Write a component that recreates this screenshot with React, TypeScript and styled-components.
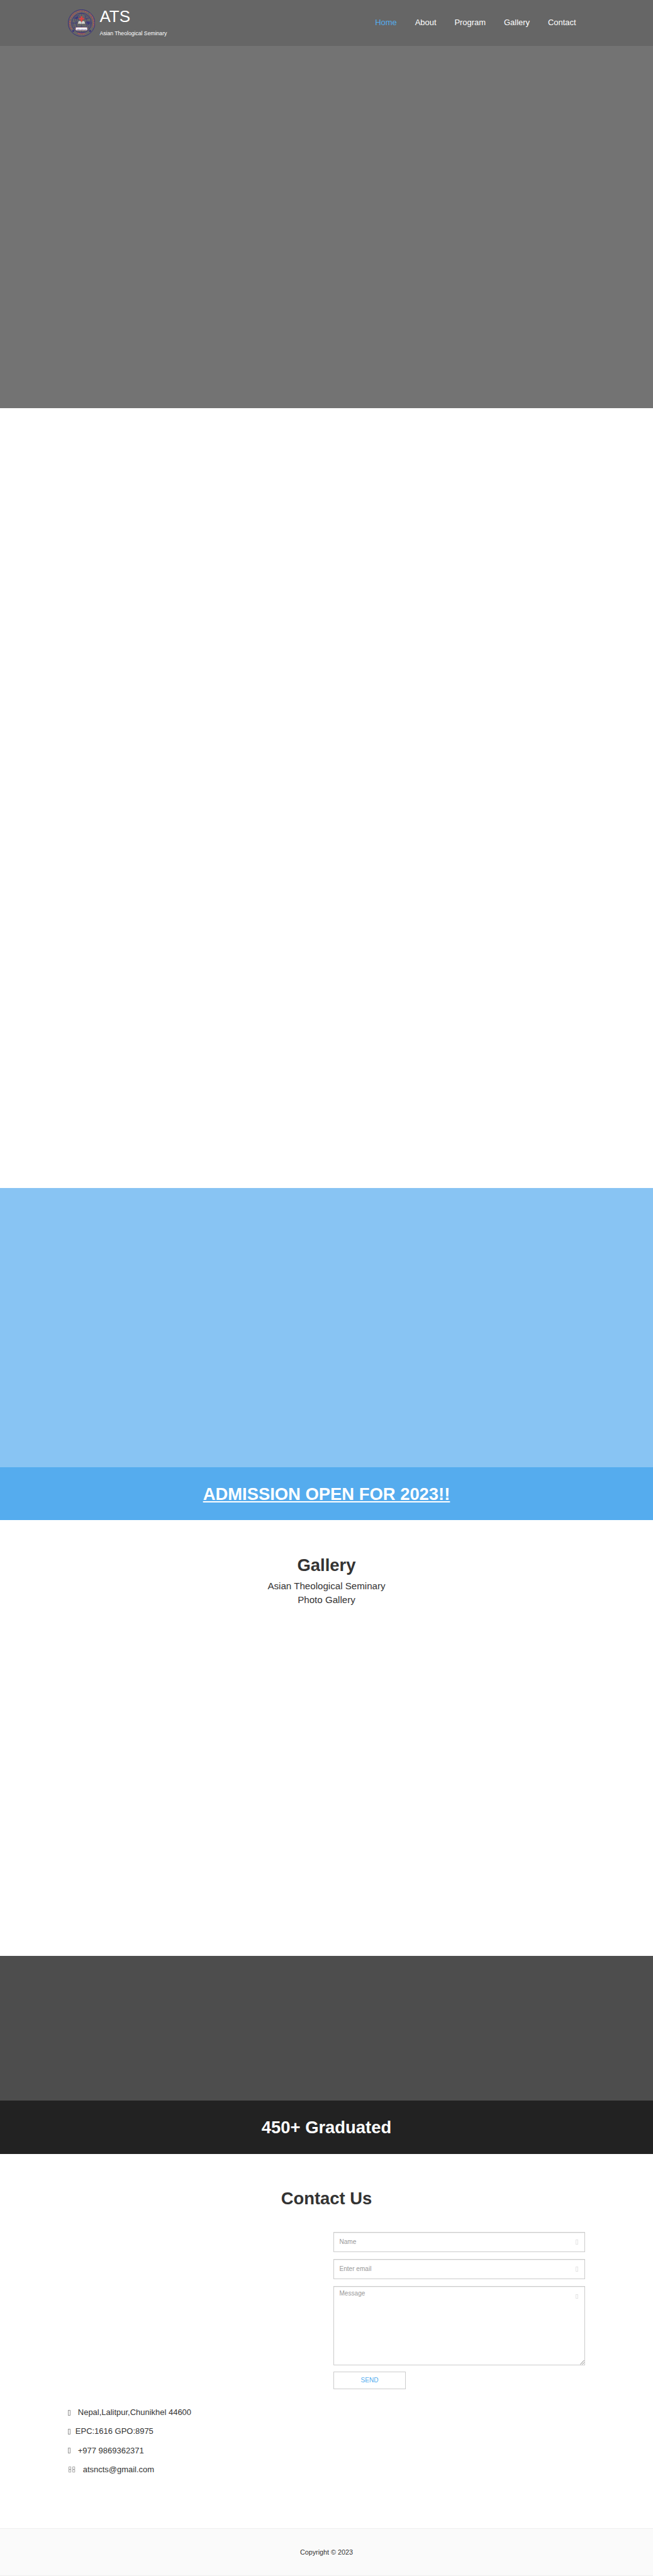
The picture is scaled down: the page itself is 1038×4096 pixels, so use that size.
import React from 'react';
import styled, { createGlobalStyle } from 'styled-components';

const SCALE = 4096 / 5680;
const u = (n: number) => `${(n * SCALE).toFixed(3)}px`;

const GlobalStyle = createGlobalStyle`
  *, *::before, *::after { box-sizing: border-box; }
  body {
    margin: 0;
    background: #fff;
    color: #333;
    font-family: "Liberation Sans", Arial, Helvetica, sans-serif;
  }
`;

const Page = styled.div`
  width: 100%;
  height: ${u(5680)};
  display: flex;
  flex-direction: column;
  overflow: hidden;
`;

const Container = styled.div`
  width: ${u(1140)};
  margin: 0 auto;
`;

const Band = styled.section<{ $h: number; $bg: string }>`
  flex: none;
  height: ${p => u(p.$h)};
  background: ${p => p.$bg};
`;

const Header = styled.header`
  height: ${u(101)};
  background: #666;
`;

const HeaderRow = styled(Container)`
  height: 100%;
  display: flex;
  justify-content: space-between;
  align-items: center;
`;

const Brand = styled.a`
  display: flex;
  align-items: center;
  gap: ${u(10)};
  color: #fff;
`;

const Emblem = styled.svg`
  display: block;
  width: ${u(60)};
  height: ${u(60)};
`;

const BrandText = styled.div`
  display: flex;
  flex-direction: column;
  gap: ${u(6.5)};
`;

const BrandName = styled.span`
  font-size: ${u(36)};
  line-height: ${u(40)};
`;

const BrandTag = styled.span`
  font-size: ${u(12)};
  line-height: ${u(20)};
`;

const Nav = styled.nav`
  display: flex;
  gap: ${u(40)};
  padding-right: ${u(20)};
`;

const NavLink = styled.a<{ $active?: boolean }>`
  font-size: ${u(18)};
  line-height: ${u(20)};
  color: ${p => (p.$active ? '#55acee' : '#fff')};
`;

const Banner = styled(Band)<{ $underline?: boolean }>`
  padding-top: ${u(1)};
  text-align: center;
  font-size: ${u(38)};
  font-weight: 700;
  line-height: ${u(117)};
  color: #fff;
  text-decoration: ${p => (p.$underline ? 'underline' : 'none')};
`;

const Title = styled.h2`
  margin: 0;
  padding-top: ${u(78.6)};
  text-align: center;
  font-size: ${u(38)};
  font-weight: 700;
  line-height: ${u(42)};
`;

const Lead = styled.p`
  margin: ${u(10)} 0 0;
  text-align: center;
  font-size: ${u(21)};
  line-height: ${u(30)};
`;

const Form = styled.form`
  width: ${u(555)};
  margin: ${u(51.4)} 0 0 auto;
  display: flex;
  flex-direction: column;
  gap: ${u(15)};
`;

const Field = styled.label<{ $h: number; $top: number }>`
  display: flex;
  justify-content: space-between;
  height: ${p => u(p.$h)};
  padding: ${p => u(p.$top)} ${u(14.5)} 0 ${u(12)};
  border: 1px solid #ccc;
  box-shadow: inset 0 1px 1px rgba(0, 0, 0, 0.075);
  font-size: ${u(14)};
  line-height: ${u(20)};
  color: #999;
  position: relative;
`;

const FieldMark = styled.span<{ $top: number }>`
  width: ${u(5)};
  height: ${u(10.5)};
  margin-top: ${p => u(p.$top)};
  border: 1px solid #e4e4e4;
`;

const Grip = styled.svg`
  position: absolute;
  right: 0;
  bottom: 0;
  width: 7px;
  height: 8px;
`;

const Send = styled.button`
  width: ${u(160)};
  height: ${u(38)};
  padding: 0;
  border: 1px solid #ccc;
  background: #fff;
  color: #55acee;
  font-family: inherit;
  font-size: ${u(14)};
  line-height: ${u(20)};
`;

const Details = styled.ul`
  list-style: none;
  margin: ${u(30.8)} 0 0;
  padding: 0;
`;

const Detail = styled.li<{ $gap: number }>`
  display: flex;
  align-items: center;
  gap: ${p => u(p.$gap)};
  height: ${u(42)};
  font-size: ${u(18)};
  line-height: ${u(42)};
`;

const Tofu = styled.span`
  width: ${u(6)};
  height: ${u(12.4)};
  border: 1px solid #999;
`;

const Segments = styled.svg`
  display: block;
  width: ${u(17)};
  height: ${u(13)};
`;

const Footer = styled.footer`
  flex: none;
  height: ${u(105)};
  border-top: 1px solid #eee;
  border-bottom: 1px solid #eee;
  background: #fafafa;
  text-align: center;
  font-size: ${u(15)};
  line-height: ${u(103)};
`;

const LINKS = ['Home', 'About', 'Program', 'Gallery', 'Contact'];

function Seal() {
  return (
    <Emblem viewBox="0 0 60 60">
      <defs>
        <path id="seal-top" d="M 9.1 42.8 A 24.6 24.6 0 1 1 50.9 42.8" />
        <path id="seal-bottom" d="M 12 48.6 A 26 26 0 0 0 48 48.6" />
      </defs>
      <g fill="none" stroke="#2c2586">
        <circle cx="30" cy="30" r="29.4" strokeWidth="1.1" />
        <circle cx="30" cy="30" r="21.8" strokeWidth="1.1" />
        <g strokeWidth="0.6">
          <ellipse cx="30" cy="30" rx="12" ry="21.5" />
          <path d="M30 8.5V51M8.5 30H51.5M12 19Q30 25 48 19M12 41Q30 35 48 41" />
          <path d="M14 17l5-4 6 1 2 4-4 3 1 4-5 4-4-3zM11 29l6 2 3 5-2 6-4-3zM39 13l6 5-3 3-5-2zM40 27l9-1 1 6-4 7-3-5-4-2z" />
        </g>
      </g>
      <path d="M15 18l5-3 4 2-3 3-4 1zM41 27l7 0 0 5-3 3-2-4z" fill="#2c2586" opacity="0.65" />
      <path d="M28.3 15h3.4v4h4v3.2h-4v6.4h-3.4v-6.4h-4V19h4z" fill="#e0403f" />
      <path d="M23 25.5q4-1.2 7 .8q3-2 6.500-.8l2 6.700q-4.500-1-8.500.5q-4-1.500-8.500-.5z" fill="#d6d3ce" stroke="#444" strokeWidth="0.6" />
      <path d="M30 26.300V32.500" stroke="#555" strokeWidth="0.7" />
      <path d="M28.500 19h3v8h-3z" fill="#e0403f" />
      <rect x="17.300" y="39.800" width="25" height="6" fill="#fff" stroke="#e0706f" strokeWidth="0.4" />
      <text x="29.800" y="44.200" textAnchor="middle" fontSize="3.500" fontWeight="700" fill="#2c2586" textLength="22.500">THE PLAN OF GOD</text>
      <path id="star" d="M11.600 45.200l.6 1.500 1.600.1-1.200 1 .4 1.600-1.400-.9-1.400.9.400-1.600-1.200-1 1.600-.1zM48.800 45.200l.6 1.500 1.600.1-1.200 1 .4 1.600-1.400-.9-1.400.9.400-1.600-1.200-1 1.600-.1z" fill="#2c2586" stroke="#2c2586" strokeWidth="0.6" />
      <g fill="#c94a50" fontSize="5" fontWeight="700">
        <text textLength="100">
          <textPath href="#seal-top" textLength="100">ASIAN THEOLOGICAL SEMINARY</textPath>
        </text>
        <text textAnchor="middle">
          <textPath href="#seal-bottom" startOffset="50%" textLength="19">NEPAL</textPath>
        </text>
      </g>
    </Emblem>
  );
}

function EmailMark() {
  return (
    <Segments viewBox="0 0 17 13">
      <path
        d="M2 .7H6.500V6H2zM2 6.800H6.500V12.300H2zM10.500 .7H15V6H10.500zM10.500 6.800H15V12.300H10.500z"
        fill="none"
        stroke="#777"
        strokeWidth="0.9"
      />
    </Segments>
  );
}

export default function App() {
  return (
    <>
      <GlobalStyle />
      <Page>
        <Band $h={900} $bg="#737373">
          <Header>
            <HeaderRow>
              <Brand>
                <Seal />
                <BrandText>
                  <BrandName>ATS</BrandName>
                  <BrandTag>Asian Theological Seminary</BrandTag>
                </BrandText>
              </Brand>
              <Nav>
                {LINKS.map((label, i) => (
                  <NavLink key={label} $active={i === 0}>{label}</NavLink>
                ))}
              </Nav>
            </HeaderRow>
          </Header>
        </Band>
        <Band $h={1719} $bg="#fff" />
        <Band $h={616} $bg="#88c4f3" />
        <Banner $h={117} $bg="#55acee" $underline>ADMISSION OPEN FOR 2023!!</Banner>
        <Band $h={961} $bg="#fff">
          <Title>Gallery</Title>
          <Lead>
            Asian Theological Seminary
            <br />
            Photo Gallery
          </Lead>
        </Band>
        <Band $h={319} $bg="#4d4d4d" />
        <Banner $h={117} $bg="#222">450+ Graduated</Banner>
        <Band $h={826} $bg="#fff">
          <Container>
            <Title>Contact Us</Title>
            <Form>
              <Field $h={45} $top={12}>
                Name
                <FieldMark $top={4} />
              </Field>
              <Field $h={45} $top={12}>
                Enter email
                <FieldMark $top={4} />
              </Field>
              <Field $h={174} $top={6}>
                Message
                <FieldMark $top={10} />
                <Grip viewBox="0 0 7 8">
                  <path d="M0.500 7.500L6.500 1M3.500 7.500L6.500 4.500" stroke="#666" strokeWidth="0.8" fill="none" />
                </Grip>
              </Field>
              <Send type="button">SEND</Send>
            </Form>
            <Details>
              <Detail $gap={16}><Tofu />Nepal,Lalitpur,Chunikhel 44600</Detail>
              <Detail $gap={10.500}><Tofu />EPC:1616 GPO:8975</Detail>
              <Detail $gap={16}><Tofu />+977 9869362371</Detail>
              <Detail $gap={16}><EmailMark />atsncts@gmail.com</Detail>
            </Details>
          </Container>
        </Band>
        <Footer>Copyright © 2023</Footer>
      </Page>
    </>
  );
}
